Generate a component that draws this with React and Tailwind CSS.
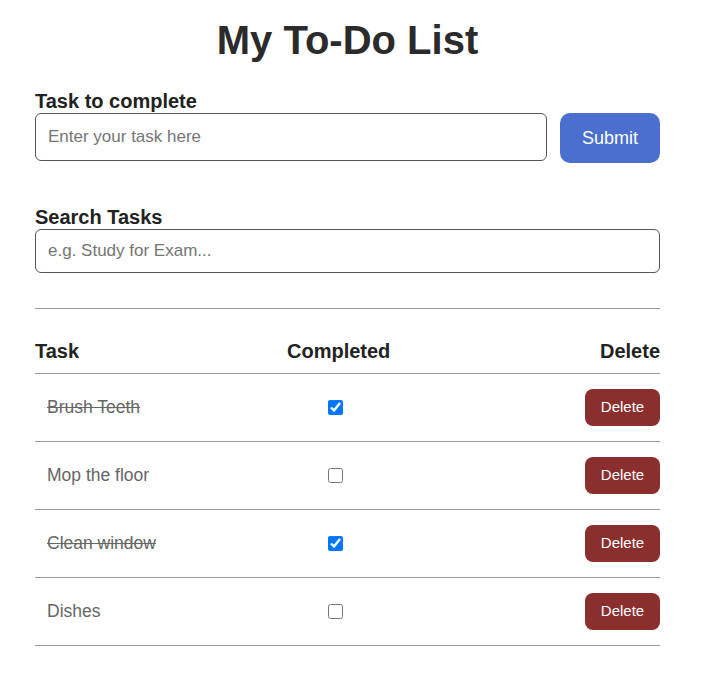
import React, { useState } from "react";

const initialTasks = [
  { id: 1, text: "Brush Teeth", done: true },
  { id: 2, text: "Mop the floor", done: false },
  { id: 3, text: "Clean window", done: true },
  { id: 4, text: "Dishes", done: false },
];

const App = () => {
  const [tasks, setTasks] = useState(initialTasks);

  const toggle = (id) =>
    setTasks((prev) => prev.map((t) => (t.id === id ? { ...t, done: !t.done } : t)));

  const remove = (id) => setTasks((prev) => prev.filter((t) => t.id !== id));

  return (
    <div className="min-h-screen bg-white font-['Liberation_Sans',Arial,sans-serif] text-[#222]">
      <div className="ml-[35px] w-[625px] pt-[17px]">
        <h1 className="text-center text-[40px] font-bold leading-[46px] text-[#2b2b2b]">
          My To-Do List
        </h1>

        <label className="mt-[27px] block text-[20px] font-bold leading-[23px]">
          Task to complete
        </label>
        <div className="flex items-start gap-[13px]">
          <input
            type="text"
            placeholder="Enter your task here"
            className="h-[48px] flex-1 rounded-[6px] border border-[#555] px-[12px] text-[17px] placeholder:text-[#757575] outline-none"
          />
          <button className="h-[50px] w-[100px] rounded-[10px] bg-[#4a6fcf] text-[18px] text-white">
            Submit
          </button>
        </div>

        <label className="mt-[43px] block text-[20px] font-bold leading-[23px]">
          Search Tasks
        </label>
        <input
          type="text"
          placeholder="e.g. Study for Exam..."
          className="block h-[44px] w-full rounded-[6px] border border-[#555] px-[12px] text-[17px] placeholder:text-[#757575] outline-none"
        />

        <div className="mt-[35px] border-t border-[#999]" />

        <div className="mt-[31px] grid grid-cols-[252px_100px_1fr] border-b border-[#999] pb-[10px] text-[20px] font-bold leading-[23px]">
          <span>Task</span>
          <span className="text-center">Completed</span>
          <span className="text-right">Delete</span>
        </div>

        {tasks.map((task) => (
          <div
            key={task.id}
            className="grid h-[68px] grid-cols-[252px_100px_1fr] items-center border-b border-[#999]"
          >
            <span
              className={`pl-[12px] text-[17.5px] text-[#666] ${task.done ? "line-through" : ""}`}
            >
              {task.text}
            </span>
            <span className="flex justify-center pr-[4px]">
              <input
                type="checkbox"
                checked={task.done}
                onChange={() => toggle(task.id)}
                className="h-[15px] w-[15px]"
              />
            </span>
            <span className="flex justify-end">
              <button
                onClick={() => remove(task.id)}
                className="h-[37px] w-[75px] rounded-[8px] bg-[#8b2e2e] text-[15px] text-white"
              >
                Delete
              </button>
            </span>
          </div>
        ))}
      </div>
    </div>
  );
};

export default App;
